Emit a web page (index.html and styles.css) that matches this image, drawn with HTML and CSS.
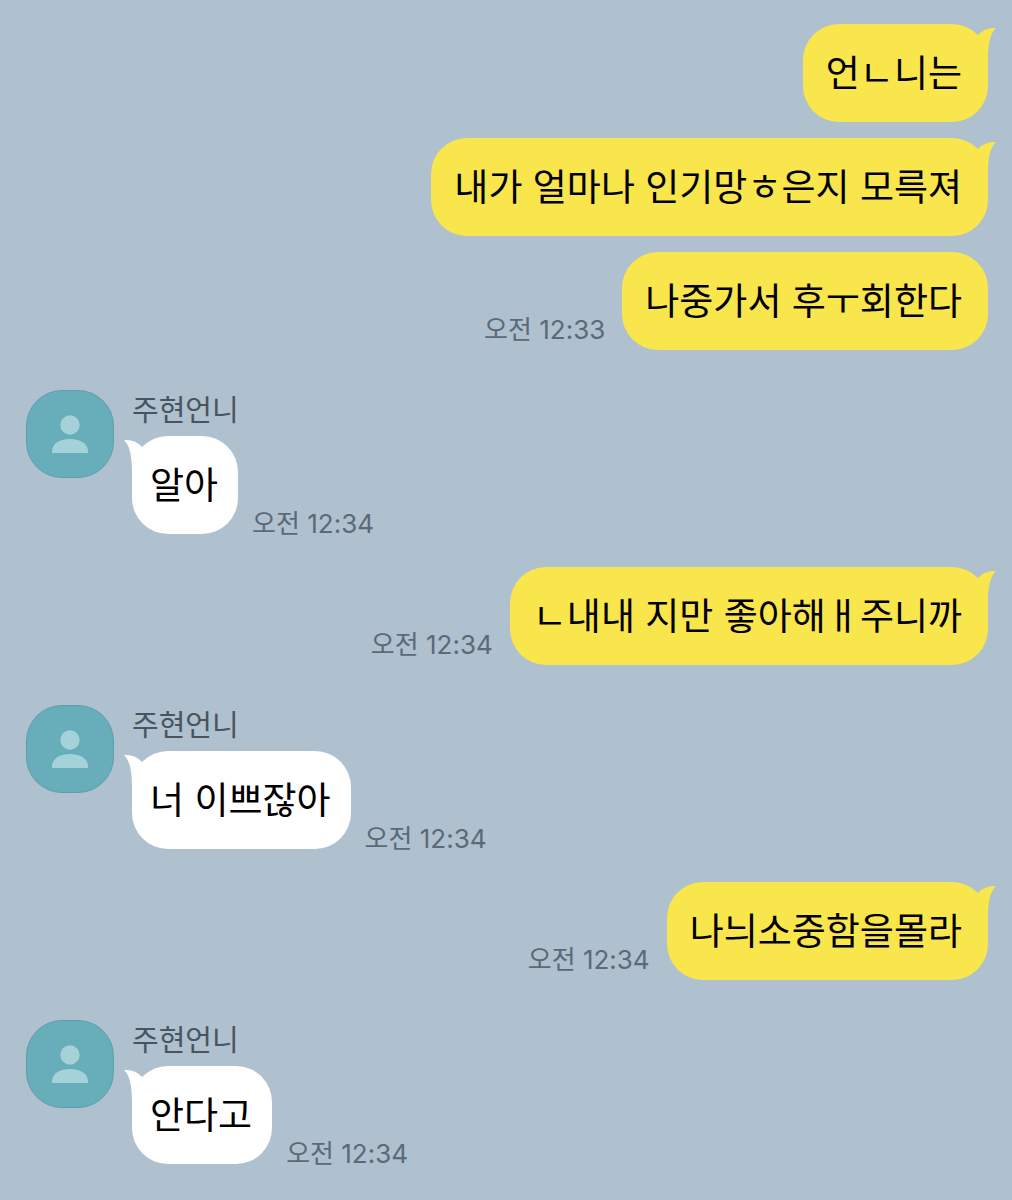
FILE: index.html
```
<!DOCTYPE html>
<html lang="ko">
<head>
    <meta charset="UTF-8">
    <meta name="viewport" content="width=device-width, initial-scale=1.0">
    <title>주현언니</title>
    <link rel="stylesheet" href="styles.css">
</head>
<body>

<!-- shared shapes -->
<svg class="shapes" aria-hidden="true">
    <symbol id="tail" viewBox="0 0 20 34">
        <path d="M2 8 Q9 0 20 1 C15 6 12 14 12 34 L2 34 Z"/>
    </symbol>
    <symbol id="person" viewBox="0 0 36 38">
        <circle cx="18" cy="10" r="9.7"/>
        <path d="M0 38 V35.5 C1 28 8 24 18 24 S35 28 36 35.5 V38 Z"/>
    </symbol>
</svg>

<main class="chat">
    <section class="group mine">
        <div class="row">
            <p class="bubble">언ㄴ니는<svg class="tail"><use href="#tail"/></svg></p>
        </div>
        <div class="row">
            <p class="bubble">내가 얼마나 인기망ㅎ은지 모륵져<svg class="tail"><use href="#tail"/></svg></p>
        </div>
        <div class="row">
            <time class="time">오전 12:33</time>
            <p class="bubble">나중가서 후ㅜ회한다</p>
        </div>
    </section>

    <section class="group theirs">
        <div class="avatar"><svg><use href="#person"/></svg></div>
        <div class="content">
            <h2 class="name">주현언니</h2>
            <div class="row">
                <p class="bubble">알아<svg class="tail"><use href="#tail"/></svg></p>
                <time class="time">오전 12:34</time>
            </div>
        </div>
    </section>

    <section class="group mine">
        <div class="row">
            <time class="time">오전 12:34</time>
            <p class="bubble">ㄴ내내 지만 좋아해ㅐ주니까<svg class="tail"><use href="#tail"/></svg></p>
        </div>
    </section>

    <section class="group theirs">
        <div class="avatar"><svg><use href="#person"/></svg></div>
        <div class="content">
            <h2 class="name">주현언니</h2>
            <div class="row">
                <p class="bubble">너 이쁘잖아<svg class="tail"><use href="#tail"/></svg></p>
                <time class="time">오전 12:34</time>
            </div>
        </div>
    </section>

    <section class="group mine">
        <div class="row">
            <time class="time">오전 12:34</time>
            <p class="bubble">나늬소중함을몰라<svg class="tail"><use href="#tail"/></svg></p>
        </div>
    </section>

    <section class="group theirs">
        <div class="avatar"><svg><use href="#person"/></svg></div>
        <div class="content">
            <h2 class="name">주현언니</h2>
            <div class="row">
                <p class="bubble">안다고<svg class="tail"><use href="#tail"/></svg></p>
                <time class="time">오전 12:34</time>
            </div>
        </div>
    </section>
</main>

</body>
</html>
```
FILE: styles.css
```
* {
    box-sizing: border-box;
}
body {
    margin: 0;
    background-color: #afc0cf;
    color: #000;
    font-family: "Noto Sans CJK KR", sans-serif;
}
.shapes {
    display: none;
}
.chat {
    padding: 24px 24px 36px 26px;
}
.group {
    display: flex;
}
.mine {
    flex-direction: column;
    gap: 16px;
    margin-bottom: 40px;
}
.theirs {
    gap: 18px;
    margin-bottom: 33px;
}
.theirs:last-child {
    margin-bottom: 0;
}
.row {
    display: flex;
    align-items: flex-end;
}
.mine .row {
    justify-content: flex-end;
    gap: 17px;
}
.theirs .row {
    gap: 14px;
}

/* bubbles */
.bubble {
    position: relative;
    margin: 0;
    border-radius: 36px;
    font-size: 37px;
    line-height: 54px;
}
.mine .bubble {
    padding: 20px 26px 24px 23px;
    background-color: #f9e54c;
}
.theirs .bubble {
    padding: 20px 20px 24px 18px;
    background-color: #fff;
}
.tail {
    position: absolute;
    top: 3px;
    width: 20px;
    height: 34px;
}
.mine .tail {
    right: -8px;
    fill: #f9e54c;
}
.theirs .tail {
    left: -8px;
    fill: #fff;
    transform: scaleX(-1);
}

.time {
    color: #5b6a76;
    font-family: Inter, "Noto Sans CJK KR", sans-serif;
    font-size: 26px;
    line-height: 20px;
    white-space: nowrap;
}
.mine .time {
    padding-bottom: 10px;
}

/* profile */
.avatar {
    display: flex;
    flex: none;
    justify-content: center;
    align-items: center;
    width: 88px;
    height: 88px;
    border: 1px solid #5e9eab;
    border-radius: 36px;
    background-color: #68adba;
}
.avatar svg {
    width: 36px;
    height: 38px;
    fill: #a5d2d8;
}
.name {
    margin: 0 0 10px;
    color: #48545e;
    font-size: 29px;
    font-weight: normal;
    line-height: 36px;
}
```
